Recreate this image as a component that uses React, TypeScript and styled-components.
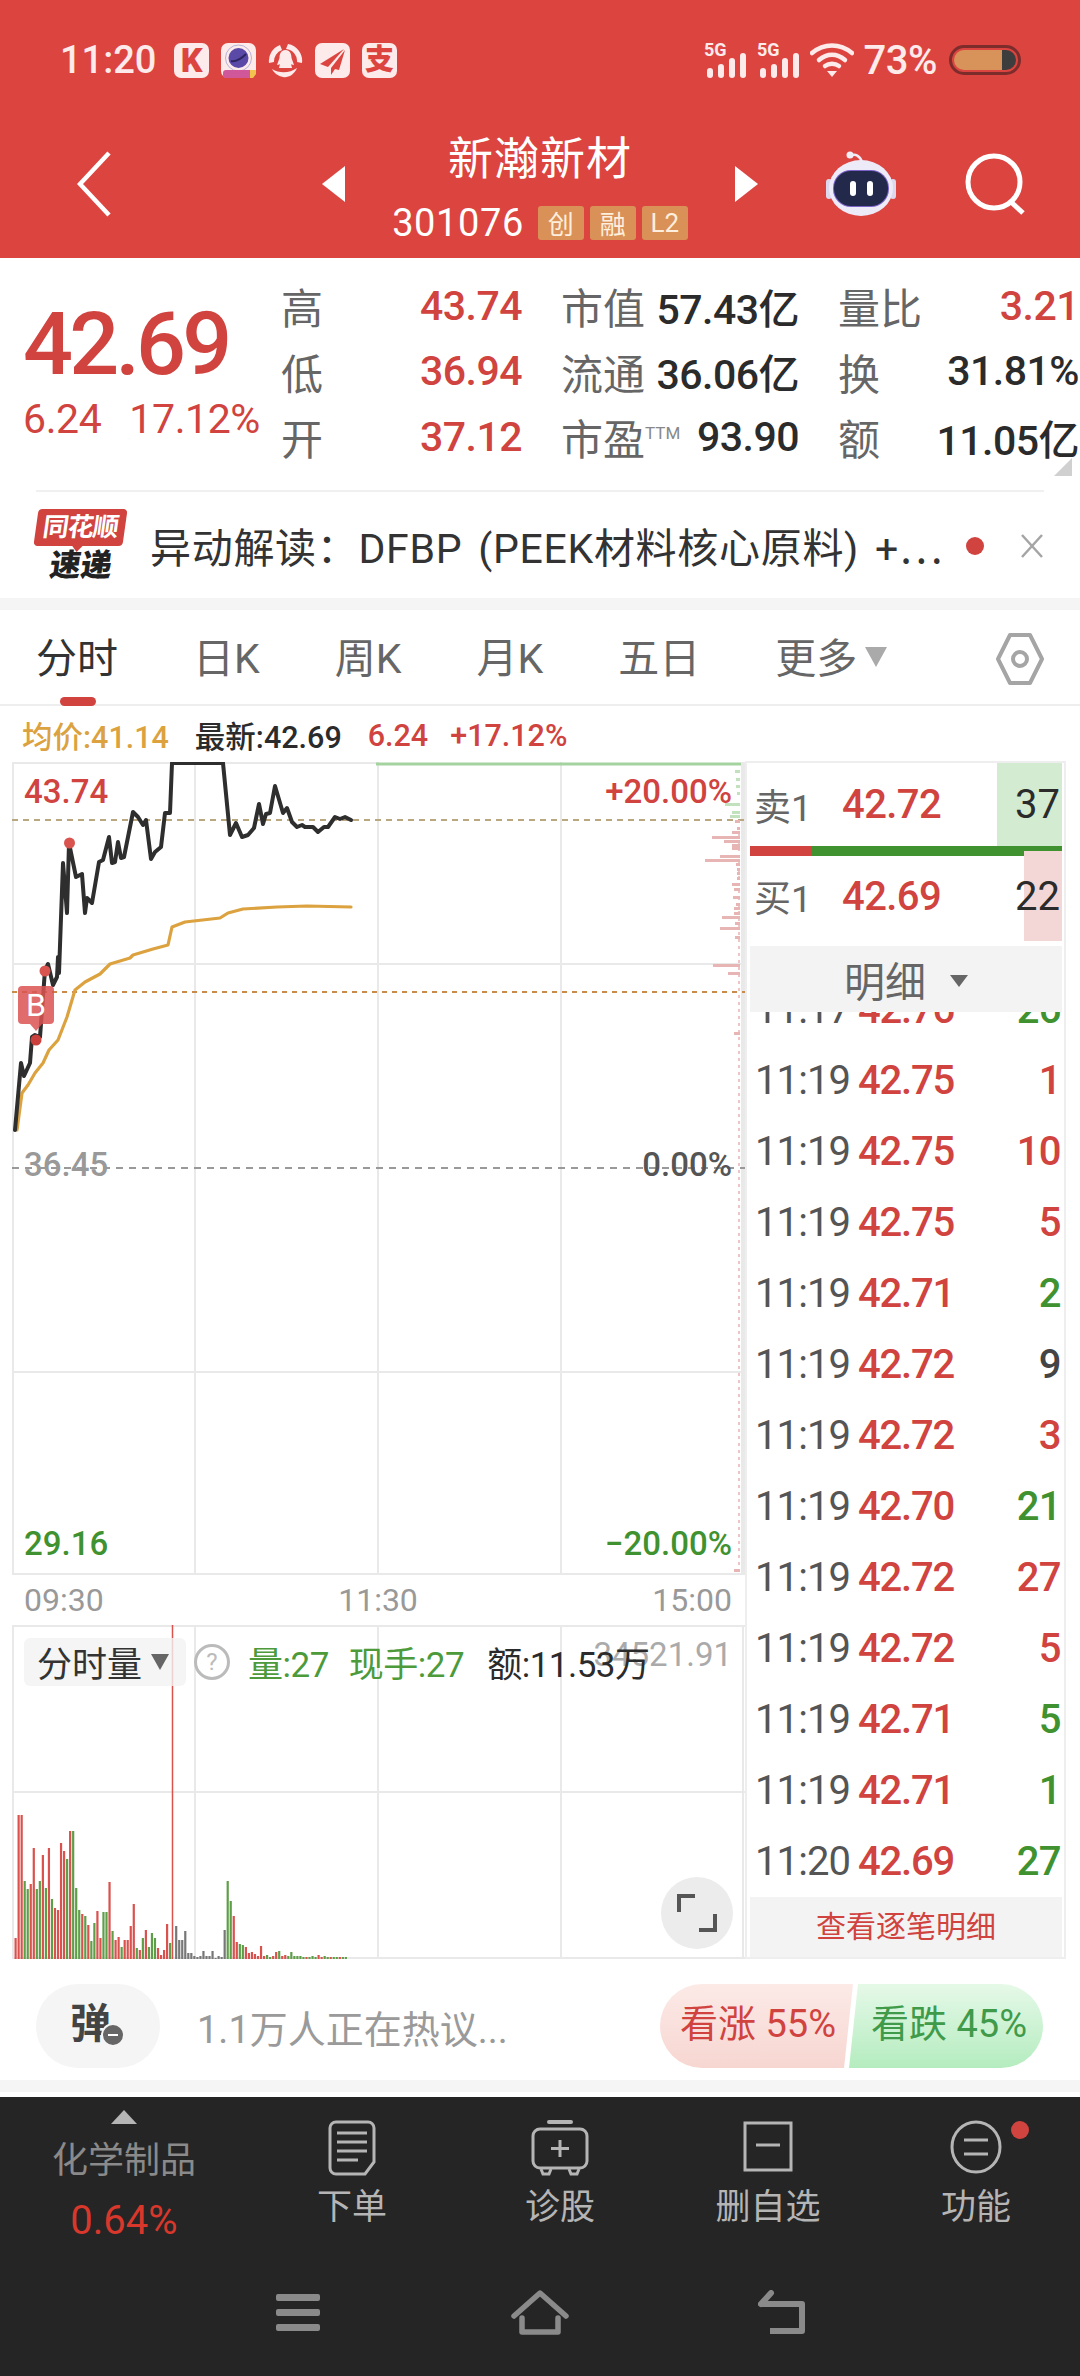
import React from "react";
import styled, { createGlobalStyle } from "styled-components";

const RED = "#d0433f";
const GREEN = "#3f922f";
const GRID = "#e9e9e9";

const GlobalStyle = createGlobalStyle`
  html, body {
    margin: 0;
    padding: 0;
    background: #fff;
  }
  * {
    box-sizing: border-box;
  }
  body {
    font-family: Roboto, "Noto Sans CJK SC", sans-serif;
  }
`;

const Page = styled.div`
  width: 1080px;
  height: 2376px;
  overflow: hidden;
  display: flex;
  flex-direction: column;
  background: #fff;
`;

/* header */
const Header = styled.header`
  height: 258px;
  background: #dc4440;
  color: #fff;
  flex-shrink: 0;
`;

const StatusBar = styled.div`
  height: 110px;
  display: flex;
  align-items: center;
  padding: 10px 60px 0;
  color: #fdeaea;
`;

const Clock = styled.span`
  font-size: 38px;
  font-weight: 500;
  width: 114px;
`;

const NoticeIcons = styled.div`
  display: flex;
  gap: 12px;
`;

const NoticeTile = styled.span`
  width: 35px;
  height: 35px;
  border-radius: 7px;
  background: #fdeaea;
  color: #dc4440;
  display: flex;
  align-items: center;
  justify-content: center;
  font-size: ${(p: { $size: number }) => p.$size}px;
  font-weight: 900;
  line-height: 1;
`;

const StatusRight = styled.div`
  margin-left: auto;
  margin-right: -1px;
  display: flex;
  align-items: center;
  gap: 10px;
`;

const BatteryText = styled.span`
  font-size: 40px;
  font-weight: 500;
  letter-spacing: -0.5px;
`;

const Battery = styled.div`
  width: 72px;
  height: 30px;
  border: 3px solid #7d2c2c;
  border-radius: 15px;
  padding: 2px;
  margin-left: 2px;
  display: flex;
  overflow: hidden;
`;

const BatteryFill = styled.div`
  width: 48px;
  background: #d8935a;
  border-radius: 10px 0 0 10px;
`;

const BatteryRest = styled.div`
  flex: 1;
  background: #3d3d3d;
  border-radius: 0 10px 10px 0;
`;

const NavRow = styled.div`
  height: 148px;
  display: grid;
  grid-template-columns: 322px 436px 322px;
  align-items: center;
`;

const BackSlot = styled.div`
  padding-left: 77px;
  display: flex;
  align-items: center;
`;

const TitleSlot = styled.div`
  display: flex;
  align-items: center;
  justify-content: space-between;
`;

const TitleStack = styled.div`
  display: flex;
  flex-direction: column;
  align-items: center;
  margin-top: 3px;
`;

const StockName = styled.div`
  font-size: 45px;
  line-height: 58px;
  letter-spacing: 1px;
`;

const CodeRow = styled.div`
  display: flex;
  align-items: center;
  gap: 6px;
  margin-top: 16px;
`;

const StockCode = styled.span`
  font-size: 38px;
  line-height: 36px;
  margin-right: 8px;
  letter-spacing: 0.6px;
`;

const TagBadge = styled.span`
  width: 46px;
  height: 34px;
  background: #d99158;
  border-radius: 3px;
  color: #fdeedd;
  font-size: 26px;
  display: flex;
  align-items: center;
  justify-content: center;
`;

const NavTools = styled.div`
  display: flex;
  align-items: center;
  padding-left: 67px;
  gap: 68px;
`;

const Caret = styled.span<{ $dir: "left" | "right" }>`
  width: 0;
  height: 0;
  border-top: 18px solid transparent;
  border-bottom: 18px solid transparent;
  ${(p) => (p.$dir === "left" ? "border-right: 23px solid #fff;" : "border-left: 23px solid #fff;")}
`;

/* quote */
const Quote = styled.section`
  height: 232px;
  display: flex;
  position: relative;
  flex-shrink: 0;
`;

const PriceBlock = styled.div`
  width: 281px;
  padding: 38px 0 0 23px;
  color: ${RED};
`;

const BigPrice = styled.div`
  font-size: 88px;
  line-height: 96px;
  font-weight: 500;
  letter-spacing: -3.8px;
`;

const ChangeRow = styled.div`
  display: flex;
  gap: 28px;
  font-size: 41px;
  line-height: 48px;
  margin-top: 3px;
  letter-spacing: -0.4px;
`;

const StatGrid = styled.div`
  display: grid;
  grid-template-columns: 241px 238px 241px;
  column-gap: 39px;
  grid-auto-rows: 65.5px;
  padding-top: 15px;
`;

const StatCell = styled.div`
  display: flex;
  justify-content: space-between;
  align-items: center;
  white-space: nowrap;
`;

const StatLabel = styled.span`
  font-size: 42px;
  color: #666;
  position: relative;
`;

const StatSup = styled.sup`
  font-size: 17px;
  color: #888;
  vertical-align: 16px;
  line-height: 0;
`;

const StatValue = styled.span<{ $red?: boolean }>`
  font-size: 41px;
  font-weight: 500;
  letter-spacing: -0.5px;
  color: ${(p) => (p.$red ? RED : "#2b2b2b")};
`;

const CornerMark = styled.span`
  position: absolute;
  right: 8px;
  bottom: 14px;
  width: 0;
  height: 0;
  border-left: 18px solid transparent;
  border-bottom: 18px solid #d0d0d0;
`;

/* news */
const NewsRow = styled.div`
  height: 108px;
  margin: 0 36px;
  border-top: 2px solid #f0f0f0;
  display: flex;
  align-items: center;
  flex-shrink: 0;
  position: relative;
`;

const Logo = styled.div`
  width: 89px;
  display: flex;
  flex-direction: column;
  align-items: center;
  margin-top: 2px;
`;

const LogoBubble = styled.div`
  width: 89px;
  height: 37px;
  background: ${RED};
  border-radius: 4px;
  color: #fff;
  font-size: 26px;
  font-weight: 700;
  line-height: 37px;
  text-align: center;
  white-space: nowrap;
  letter-spacing: -1px;
  transform: skewX(-8deg);
  position: relative;
  &::after {
    content: "";
    position: absolute;
    left: 38px;
    bottom: -6px;
    border-left: 6px solid transparent;
    border-right: 6px solid transparent;
    border-top: 7px solid ${RED};
  }
`;

const LogoWord = styled.div`
  font-size: 31px;
  font-weight: 900;
  line-height: 34px;
  color: #222;
  margin-top: 3px;
  transform: skewX(-8deg);
`;

const NewsText = styled.div`
  font-size: 41px;
  color: #333;
  margin-left: 25px;
  white-space: nowrap;
  letter-spacing: 0.7px;
  word-spacing: 5px;
`;

const NewsEllipsis = styled.span`
  font-family: "Noto Sans CJK SC", sans-serif;
`;

const NewsDot = styled.span`
  position: absolute;
  left: 930px;
  top: 45px;
  width: 18px;
  height: 18px;
  border-radius: 50%;
  background: ${RED};
`;

const NewsClose = styled.svg`
  position: absolute;
  right: 0;
  top: 42px;
`;

const Band = styled.div<{ $h: number }>`
  height: ${(p) => p.$h}px;
  background: #f5f5f5;
  flex-shrink: 0;
`;

/* period tabs */
const Tabs = styled.nav`
  height: 96px;
  display: flex;
  gap: 75px;
  padding: 0 36px 0 36px;
  align-items: flex-start;
  border-bottom: 2px solid #eee;
  flex-shrink: 0;
`;

const Tab = styled.div<{ $active?: boolean }>`
  font-size: 41px;
  line-height: 98px;
  height: 94px;
  white-space: nowrap;
  color: ${(p) => (p.$active ? "#333" : "#666")};
  position: relative;
  ${(p) =>
    p.$active &&
    `
    &::after {
      content: "";
      position: absolute;
      left: 24px;
      bottom: -2px;
      width: 36px;
      height: 9px;
      border-radius: 5px;
      background: ${RED};
    }
  `}
`;

const MoreTriangle = styled.span`
  display: inline-block;
  margin-left: 8px;
  vertical-align: 6px;
  border-left: 11px solid transparent;
  border-right: 11px solid transparent;
  border-top: 20px solid #aaa;
`;

const HexIcon = styled.svg`
  margin-left: auto;
  margin-top: 22px;
`;

/* price readout */
const Readout = styled.div`
  height: 56px;
  display: flex;
  align-items: center;
  padding: 2px 0 0 22px;
  font-size: 30.5px;
  font-weight: 500;
  flex-shrink: 0;
`;

const ReadoutItem = styled.span<{ $color: string; $gap: number }>`
  color: ${(p) => p.$color};
  margin-right: ${(p) => p.$gap}px;
  white-space: nowrap;
`;

/* chart + trade list */
const Market = styled.div`
  height: 1198px;
  display: flex;
  padding-left: 12px;
  flex-shrink: 0;
`;

const ChartColumn = styled.div`
  width: 733px;
  display: flex;
  flex-direction: column;
`;

const PricePane = styled.div`
  height: 813px;
  position: relative;
`;

const Plot = styled.svg`
  display: block;
`;

const PaneLabel = styled.span<{ $top: number; $color: string; $right?: boolean }>`
  position: absolute;
  top: ${(p) => p.$top}px;
  ${(p) => (p.$right ? "right: 13px;" : "left: 12px;")}
  color: ${(p) => p.$color};
  font-size: 33px;
  line-height: 40px;
  font-weight: 500;
`;

const BuyBadge = styled.span`
  position: absolute;
  left: 6px;
  top: 224px;
  width: 36px;
  height: 38px;
  border-radius: 4px;
  background: rgba(218, 82, 82, 0.85);
  color: #fff;
  font-size: 32px;
  line-height: 38px;
  text-align: center;
  &::after {
    content: "";
    position: absolute;
    left: 12px;
    bottom: -7px;
    border-left: 6px solid transparent;
    border-right: 6px solid transparent;
    border-top: 7px solid rgba(218, 82, 82, 0.85);
  }
`;

const TimeAxis = styled.div`
  height: 50px;
  display: flex;
  justify-content: space-between;
  align-items: center;
  padding: 0 13px 0 12px;
  font-size: 32px;
  color: #999;
`;

const VolumePane = styled.div`
  height: 334px;
  position: relative;
`;

const VolumeLegend = styled.div`
  position: absolute;
  left: 12px;
  top: 11px;
  display: flex;
  align-items: center;
  font-size: 35px;
  white-space: nowrap;
`;

const VolumeSelect = styled.div`
  width: 162px;
  height: 48px;
  background: #f3f3f3cc;
  border-radius: 6px;
  display: flex;
  align-items: center;
  padding-left: 13px;
  gap: 9px;
  color: #333;
  font-size: 35px;
`;

const SelectTriangle = styled.span`
  border-left: 9px solid transparent;
  border-right: 9px solid transparent;
  border-top: 16px solid #666;
`;

const HelpIcon = styled.span`
  width: 36px;
  height: 36px;
  border-radius: 50%;
  border: 3px solid #bbb;
  margin: 0 18px 0 8px;
  color: #bbb;
  font-size: 24px;
  line-height: 30px;
  text-align: center;
`;

const LegendValue = styled.span<{ $color: string; $gap: number }>`
  color: ${(p) => p.$color};
  margin-right: ${(p) => p.$gap}px;
  letter-spacing: -0.5px;
`;

const VolumeMax = styled.span`
  position: absolute;
  right: 13px;
  top: 10px;
  font-size: 33px;
  color: #aaa;
`;

const ExpandButton = styled.button`
  position: absolute;
  left: 649px;
  top: 252px;
  width: 72px;
  height: 72px;
  border: 0;
  padding: 0;
  border-radius: 50%;
  background: #ececec;
  display: flex;
  align-items: center;
  justify-content: center;
`;

const TradePanel = styled.aside`
  width: 321px;
  height: 1198px;
  margin-top: -1px;
  border: 2px solid #eee;
  padding: 0 2px 0 3px;
  display: flex;
  flex-direction: column;
`;

const DepthRow = styled.div<{ $h: number }>`
  height: ${(p) => p.$h}px;
  display: flex;
  align-items: center;
  position: relative;
  padding: 0 2px 0 4px;
  font-size: 40px;
  flex-shrink: 0;
`;

const DepthShade = styled.span<{ $color: string; $top: number; $width: number; $h: number }>`
  position: absolute;
  right: 0;
  top: ${(p) => p.$top}px;
  width: ${(p) => p.$width}px;
  height: ${(p) => p.$h}px;
  background: ${(p) => p.$color};
`;

const DepthLabel = styled.span`
  width: 88px;
  color: #666;
  position: relative;
  font-size: 37px;
`;

const DepthPrice = styled.span`
  color: ${RED};
  position: relative;
  font-weight: 500;
  letter-spacing: -0.6px;
`;

const DepthQty = styled.span`
  margin-left: auto;
  color: #2b2b2b;
  position: relative;
`;

const DepthBar = styled.div`
  height: 10px;
  background: ${GREEN};
  position: relative;
  flex-shrink: 0;
`;

const DepthBarRed = styled.div`
  width: 62px;
  height: 100%;
  background: ${RED};
`;

const DetailToggle = styled.div`
  height: 66px;
  margin-top: 10px;
  background: #f3f3f3;
  display: flex;
  align-items: center;
  justify-content: center;
  gap: 24px;
  color: #666;
  font-size: 41px;
  flex-shrink: 0;
  position: relative;
`;

const ToggleTriangle = styled.span`
  border-left: 9px solid transparent;
  border-right: 9px solid transparent;
  border-top: 12px solid #666;
  margin-top: 4px;
`;

const TradeList = styled.div`
  flex: 1;
  min-height: 0;
  overflow: hidden;
  display: flex;
  flex-direction: column;
  justify-content: flex-end;
`;

const TradeRow = styled.div`
  height: 71px;
  flex-shrink: 0;
  display: flex;
  align-items: center;
  padding: 0 1px 0 5px;
  font-size: 40px;
`;

const TradeTime = styled.span`
  width: 103px;
  color: #555;
  letter-spacing: -0.9px;
`;

const TradePrice = styled.span`
  color: ${RED};
  font-weight: 500;
  letter-spacing: -1.2px;
`;

const TradeQty = styled.span<{ $tone: "up" | "down" | "flat" }>`
  margin-left: auto;
  font-weight: 500;
  letter-spacing: -0.6px;
  color: ${(p) => (p.$tone === "up" ? RED : p.$tone === "down" ? GREEN : "#444")};
`;

const ViewAll = styled.div`
  height: 60px;
  background: #f3f3f3;
  color: ${RED};
  font-size: 30px;
  line-height: 60px;
  text-align: center;
  flex-shrink: 0;
`;

/* comment bar */
const CommentBar = styled.div`
  flex: 1;
  display: flex;
  align-items: center;
  padding: 12px 37px 0 36px;
`;

const DanmuButton = styled.div`
  width: 124px;
  height: 84px;
  border-radius: 42px;
  background: #f5f5f5;
  color: #444;
  font-size: 41px;
  font-weight: 700;
  line-height: 80px;
  padding-left: 34px;
  position: relative;
`;

const DanmuMinus = styled.span`
  position: absolute;
  left: 65px;
  top: 39px;
  width: 24px;
  height: 24px;
  border-radius: 50%;
  border: 2px solid #f5f5f5;
  background: #666;
  &::after {
    content: "";
    position: absolute;
    left: 5px;
    top: 9px;
    width: 10px;
    height: 2px;
    background: #fff;
  }
`;

const CommentHint = styled.span`
  margin-left: 37px;
  font-size: 38px;
  color: #9a9a9a;
  letter-spacing: 0;
`;

const VotePill = styled.div`
  margin-left: auto;
  width: 383px;
  height: 84px;
  display: flex;
  border-radius: 42px;
  overflow: hidden;
`;

const VoteSide = styled.div<{ $up?: boolean }>`
  height: 100%;
  font-size: 38px;
  line-height: 80px;
  white-space: nowrap;
  ${(p) =>
    p.$up
      ? `
    width: 193px;
    padding-left: 20px;
    color: ${RED};
    background: linear-gradient(#fceae7, #f7d6d1);
    clip-path: polygon(0 0, 100% 0, calc(100% - 9px) 100%, 0 100%);
  `
      : `
    width: 194px;
    margin-left: -4px;
    padding-left: 22px;
    color: #3f9a4a;
    background: linear-gradient(#e6f9e8, #b4ecbf);
    clip-path: polygon(9px 0, 100% 0, 100% 100%, 0 100%);
  `}
`;

/* dark function bar */
const DarkBar = styled.footer`
  margin-top: 5px;
  height: 279px;
  background: #252525;
  flex-shrink: 0;
`;

const FuncRow = styled.div`
  display: flex;
  height: 170px;
`;

const SectorItem = styled.div`
  width: 248px;
  display: flex;
  flex-direction: column;
  align-items: center;
  padding-top: 13px;
`;

const SectorArrow = styled.span`
  border-left: 13px solid transparent;
  border-right: 13px solid transparent;
  border-bottom: 14px solid #b5b5b5;
`;

const SectorName = styled.span`
  font-size: 36px;
  line-height: 50px;
  margin-top: 12px;
  color: #8a8a8a;
`;

const SectorChange = styled.span`
  font-size: 40px;
  line-height: 48px;
  margin-top: 11px;
  color: #d8372c;
`;

const FuncItem = styled.div`
  width: 208px;
  display: flex;
  flex-direction: column;
  align-items: center;
  padding-top: 23px;
  position: relative;
`;

const FuncLabel = styled.span`
  font-size: 35px;
  line-height: 48px;
  margin-top: 8px;
  color: #b5b5b5;
`;

const FuncDot = styled.span`
  position: absolute;
  left: 139px;
  top: 24px;
  width: 18px;
  height: 18px;
  border-radius: 50%;
  background: ${RED};
`;

const SystemNav = styled.div`
  display: grid;
  grid-template-columns: repeat(3, 242px);
  justify-content: center;
  justify-items: center;
  padding-top: 23px;
`;

const Wave = ({ d, stroke, w }: { d: string; stroke: string; w: number }) => (
  <path d={d} fill="none" stroke={stroke} strokeWidth={w} strokeLinejoin="round" strokeLinecap="round" />
);

const PRICE_LINE =
  "15,1130 21,1063 24,1076 30,1063 32,1037 35,1035 40,1037 45,970 48,964 53,985 57,977 58,957 59,973 63,863 67,913 69,843 76,877 82,874 85,913 87,898 92,903 99,862 103,860 109,837 112,863 115,862 118,842 121,858 124,857 133,812 138,817 143,825 146,820 151,859 155,852 161,847 165,813 170,813 172,763 223,763 230,835 236,823 242,837 248,835 254,828 259,804 263,824 266,814 270,813 275,786 283,813 287,808 292,822 297,827 302,825 305,827 313,827 318,832 324,827 328,827 335,817 340,819 345,817 351,820";

const AVG_LINE =
  "17,1130 22,1093 28,1085 35,1073 43,1063 49,1050 58,1040 67,1017 75,990 85,982 100,974 110,964 130,958 133,955 153,949 168,945 172,927 185,922 220,918 228,913 243,909 277,907 307,906 351,907";

const ASK_BARS: [number, number][] = [[770, 5], [778, 4], [785, 4], [792, 3], [803, 15], [811, 8], [815, 10]];
const BID_BARS: [number, number][] = [
  [820, 5], [827, 3], [831, 8], [836, 28], [840, 16], [844, 8], [847, 8], [855, 20], [859, 35], [863, 4],
  [868, 3], [872, 3], [877, 3], [883, 8], [888, 6], [896, 7], [903, 4], [907, 6], [912, 6], [916, 18],
  [922, 5], [927, 20], [936, 5], [964, 27], [972, 12], [1032, 6], [1569, 6],
];

// height + colour per minute, read off the volume pane
const VOLUME =
  "21r 144r 144r 78g 70g 75r 111r 70g 78g 104r 71g 111r 60g 51r 49r 116r 108r 100g 128r 128g 71g 49g 45r 43g 34r 18g 36g 48r 21r 47g 47g 77r 28g 19r 22r 12g 19r 19r 33r 55r 11g 9r 21g 29r 12g 26g 21g 11r 4r 9r 35r 16g 0r 33k 19k 19k 28k 6k 6k 3k 2k 3k 8k 3k 3k 8k 1k 3k 2k 29k 78g 58g 43r 17r 15g 14g 12r 6r 7r 5r 3r 13r 3r 4g 2g 3r 7r 8g 3r 4r 3g 7g 3g 3g 3g 2g 2r 2g 3g 2g 4r 2r 3g 2g 2r 2g 2g 2r 2g 2g";

const VOL_COLOR: Record<string, string> = { r: "#d9524e", g: "#5f9e48", k: "#777" };

const TRADES: [string, string, string, "up" | "down" | "flat"][] = [
  ["11:17", "42.76", "26", "down"],
  ["11:19", "42.75", "1", "up"],
  ["11:19", "42.75", "10", "up"],
  ["11:19", "42.75", "5", "up"],
  ["11:19", "42.71", "2", "down"],
  ["11:19", "42.72", "9", "flat"],
  ["11:19", "42.72", "3", "up"],
  ["11:19", "42.70", "21", "down"],
  ["11:19", "42.72", "27", "up"],
  ["11:19", "42.72", "5", "up"],
  ["11:19", "42.71", "5", "down"],
  ["11:19", "42.71", "1", "down"],
  ["11:20", "42.69", "27", "down"],
];

const STATS: { label: React.ReactNode; value: string; red?: boolean }[] = [
  { label: "高", value: "43.74", red: true },
  { label: "市值", value: "57.43亿" },
  { label: "量比", value: "3.21", red: true },
  { label: "低", value: "36.94", red: true },
  { label: "流通", value: "36.06亿" },
  { label: "换", value: "31.81%" },
  { label: "开", value: "37.12", red: true },
  { label: <>市盈<StatSup>TTM</StatSup></>, value: "93.90" },
  { label: "额", value: "11.05亿" },
];

const SignalIcon = () => (
  <svg width="43" height="44" viewBox="0 -4 43 44">
    <text x="0" y="14" fontSize="18" fontWeight="700" fill="#fdeaea" fontFamily="Roboto, sans-serif">5G</text>
    <rect x="3" y="26" width="6" height="10" rx="3" fill="#fdeaea" />
    <rect x="14" y="22" width="6" height="14" rx="3" fill="#fdeaea" />
    <rect x="25" y="16" width="6" height="20" rx="3" fill="#fdeaea" />
    <rect x="36" y="11" width="6" height="25" rx="3" fill="#fdeaea" />
  </svg>
);

const WifiIcon = () => (
  <svg width="44" height="36" viewBox="0 0 44 36" fill="none" stroke="#fdeaea" strokeWidth="4.5" strokeLinecap="round">
    <path d="M2 11C14 1 30 1 42 11" />
    <path d="M9 18C17 11 27 11 35 18" />
    <path d="M15 24C19 21 25 21 29 24" />
    <path d="M17 29H27L22 35Z" fill="#fdeaea" stroke="none" />
  </svg>
);

const CameraApp = () => (
  <svg width="35" height="35" viewBox="0 0 35 35">
    <rect width="35" height="35" rx="7" fill="#fdeaea" />
    <circle cx="17.5" cy="15" r="13" fill="none" stroke="#b6b3d8" strokeWidth="1" />
    <circle cx="17.5" cy="15" r="10" fill="#5b49a8" />
    <path d="M10 18C15 19 20 16 25 11" stroke="#2d2560" strokeWidth="2" fill="none" />
    <rect x="2" y="27" width="31" height="8" rx="3" fill="#d0579a" />
    <path d="M29 27H35V31L32 35H29Z" fill="#f2c14e" />
  </svg>
);

const QqApp = () => (
  <svg width="35" height="35" viewBox="0 0 35 35">
    <path d="M20 1A17 17 0 0 1 34 20L29 19A12 12 0 0 0 18 6Z" fill="#fdeaea" />
    <path d="M12 2L14 7A12 12 0 0 0 6 19L1 20A17 17 0 0 1 12 2Z" fill="#fdeaea" />
    <path d="M4 26C12 31 22 30 29 25C26 32 20 35 15 34C10 33 6 30 4 26Z" fill="#fdeaea" />
    <path d="M17.5 7C13 7 11.5 11 11.5 15L9 22C11 22 12 21 12 21L11 25H24L23 21C23 21 24 22 26 22L23.5 15C23.5 11 22 7 17.5 7Z" fill="#fdeaea" />
  </svg>
);

const PlaneApp = () => (
  <svg width="35" height="35" viewBox="0 0 35 35">
    <rect width="35" height="35" rx="7" fill="#fdeaea" />
    <path d="M29 6L5 21L13 24Z" fill="#dc4440" />
    <path d="M30 7L16 25L16 32L20 26L24 27Z" fill="#dc4440" />
  </svg>
);

const RobotIcon = () => (
  <svg width="72" height="66" viewBox="0 0 72 66">
    <path d="M26 5C30 2 35 5 37 11" fill="none" stroke="#efeaf6" strokeWidth="2.5" />
    <circle cx="25" cy="4" r="3.5" fill="#f2eef8" />
    <rect x="1" y="28" width="6" height="20" rx="3" fill="#dcd8ee" />
    <rect x="65" y="28" width="6" height="20" rx="3" fill="#dcd8ee" />
    <ellipse cx="36" cy="37" rx="32" ry="28" fill="#eeebf8" />
    <rect x="8" y="19" width="56" height="37" rx="18" fill="#7a62c8" />
    <rect x="9" y="20" width="54" height="35" rx="17" fill="#22294a" />
    <rect x="25" y="30" width="6" height="15" rx="3" fill="#fff" />
    <rect x="42" y="30" width="6" height="15" rx="3" fill="#fff" />
  </svg>
);

const App = () => {
  const gridColor = GRID;
  return (
    <Page>
      <GlobalStyle />
      <Header>
        <StatusBar>
          <Clock>11:20</Clock>
          <NoticeIcons>
            <NoticeTile $size={34}>K</NoticeTile>
            <CameraApp />
            <QqApp />
            <PlaneApp />
            <NoticeTile $size={29}>支</NoticeTile>
          </NoticeIcons>
          <StatusRight>
            <SignalIcon />
            <SignalIcon />
            <WifiIcon />
            <BatteryText>73%</BatteryText>
            <Battery>
              <BatteryFill />
              <BatteryRest />
            </Battery>
          </StatusRight>
        </StatusBar>
        <NavRow>
          <BackSlot>
            <svg width="34" height="66" viewBox="0 0 34 66" fill="none" stroke="#fff" strokeWidth="4.5">
              <path d="M32 2L3 33L32 64" />
            </svg>
          </BackSlot>
          <TitleSlot>
            <Caret $dir="left" />
            <TitleStack>
              <StockName>新瀚新材</StockName>
              <CodeRow>
                <StockCode>301076</StockCode>
                <TagBadge>创</TagBadge>
                <TagBadge>融</TagBadge>
                <TagBadge>L2</TagBadge>
              </CodeRow>
            </TitleStack>
            <Caret $dir="right" />
          </TitleSlot>
          <NavTools>
            <RobotIcon />
            <svg width="62" height="62" viewBox="0 0 62 62" fill="none" stroke="#fff" strokeWidth="5">
              <circle cx="29" cy="29" r="26" />
              <path d="M46 49L58 60" />
            </svg>
          </NavTools>
        </NavRow>
      </Header>

      <Quote>
        <PriceBlock>
          <BigPrice>42.69</BigPrice>
          <ChangeRow>
            <span>6.24</span>
            <span>17.12%</span>
          </ChangeRow>
        </PriceBlock>
        <StatGrid>
          {STATS.map((s, i) => (
            <StatCell key={i}>
              <StatLabel>{s.label}</StatLabel>
              <StatValue $red={s.red}>{s.value}</StatValue>
            </StatCell>
          ))}
        </StatGrid>
        <CornerMark />
      </Quote>

      <NewsRow>
        <Logo>
          <LogoBubble>同花顺</LogoBubble>
          <LogoWord>速递</LogoWord>
        </Logo>
        <NewsText>
          异动解读：DFBP (PEEK材料核心原料) +<NewsEllipsis>…</NewsEllipsis>
        </NewsText>
        <NewsDot />
        <NewsClose width="24" height="24" viewBox="0 0 24 24" fill="none" stroke="#a5a5a5" strokeWidth="2.5">
          <path d="M2 1L22 23M22 1L2 23" />
        </NewsClose>
      </NewsRow>
      <Band $h={12} />

      <Tabs>
        <Tab $active>分时</Tab>
        <Tab>日K</Tab>
        <Tab>周K</Tab>
        <Tab>月K</Tab>
        <Tab>五日</Tab>
        <Tab>
          更多
          <MoreTriangle />
        </Tab>
        <HexIcon width="48" height="54" viewBox="0 0 48 54" fill="none" stroke="#a5a5a5" strokeWidth="4">
          <path d="M14 3H34L46 27L34 51H14L2 27Z" strokeLinejoin="round" />
          <circle cx="24" cy="27" r="7" />
        </HexIcon>
      </Tabs>

      <Readout>
        <ReadoutItem $color="#dba23f" $gap={26}>均价:41.14</ReadoutItem>
        <ReadoutItem $color="#2b2b2b" $gap={26}>最新:42.69</ReadoutItem>
        <ReadoutItem $color={RED} $gap={22}>6.24</ReadoutItem>
        <ReadoutItem $color={RED} $gap={0}>+17.12%</ReadoutItem>
      </Readout>

      <Market>
        <ChartColumn>
          <PricePane>
            <Plot width="733" height="813" viewBox="12 762 733 813">
              {[964, 1372, 1574].map((y) => (
                <line key={y} x1="12" x2="745" y1={y} y2={y} stroke={gridColor} strokeWidth="2" />
              ))}
              <line x1="12" x2="378" y1="763" y2="763" stroke={gridColor} strokeWidth="2" />
              {[13, 195, 378, 561, 743].map((x) => (
                <line key={x} x1={x} x2={x} y1="762" y2="1575" stroke={gridColor} strokeWidth={x === 743 ? 4 : 2} />
              ))}
              <line x1="376" x2="741" y1="764" y2="764" stroke="#a5d3a0" strokeWidth="3" />
              <line x1="12" x2="745" y1="820" y2="820" stroke="#b9a77f" strokeWidth="2" strokeDasharray="6 5" />
              <line x1="12" x2="745" y1="992" y2="992" stroke="#c98a4a" strokeWidth="2" strokeDasharray="5 5" />
              <line x1="12" x2="745" y1="1168" y2="1168" stroke="#999" strokeWidth="2" strokeDasharray="7 6" />
              <line x1="739" x2="739" y1="820" y2="1574" stroke="#eec4c4" strokeWidth="2" strokeDasharray="3 4" />
              {ASK_BARS.map(([y, len]) => (
                <rect key={y} x={740 - len} y={y} width={len} height="3" fill="#c2e2bd" />
              ))}
              {BID_BARS.map(([y, len]) => (
                <rect key={y} x={740 - len} y={y} width={len} height="3" fill="#e8b5b5" />
              ))}
              <Wave d={`M${AVG_LINE}`} stroke="#dba23f" w={3.2} />
              <Wave d={`M${PRICE_LINE}`} stroke="#2e2e2e" w={4} />
              <circle cx="69.5" cy="843" r="5.5" fill="#d9534f" />
              <circle cx="45" cy="971" r="5.5" fill="#d9534f" />
              <circle cx="36" cy="1040" r="5.5" fill="#c9403c" />
            </Plot>
            <BuyBadge>B</BuyBadge>
            <PaneLabel $top={10} $color={RED}>43.74</PaneLabel>
            <PaneLabel $top={10} $color={RED} $right>+20.00%</PaneLabel>
            <PaneLabel $top={383} $color="#999">36.45</PaneLabel>
            <PaneLabel $top={383} $color="#555" $right>0.00%</PaneLabel>
            <PaneLabel $top={762} $color={GREEN}>29.16</PaneLabel>
            <PaneLabel $top={762} $color={GREEN} $right>−20.00%</PaneLabel>
          </PricePane>

          <TimeAxis>
            <span>09:30</span>
            <span>11:30</span>
            <span>15:00</span>
          </TimeAxis>

          <VolumePane>
            <Plot width="733" height="334" viewBox="12 1625 733 334">
              {[1626, 1792, 1958].map((y) => (
                <line key={y} x1="12" x2="745" y1={y} y2={y} stroke={gridColor} strokeWidth="2" />
              ))}
              {[13, 195, 378, 561, 743].map((x) => (
                <line key={x} x1={x} x2={x} y1="1625" y2="1959" stroke={gridColor} strokeWidth="2" />
              ))}
              {VOLUME.split(" ").map((bar, i) => {
                const h = parseInt(bar, 10);
                return (
                  <rect
                    key={i}
                    x={14.5 + i * 3.03}
                    y={1959 - h}
                    width="2.2"
                    height={h}
                    fill={VOL_COLOR[bar[bar.length - 1]]}
                  />
                );
              })}
              <line x1="172.5" x2="172.5" y1="1625" y2="1959" stroke="#d9524e" strokeWidth="1.5" />
            </Plot>
            <VolumeMax>34521.91</VolumeMax>
            <VolumeLegend>
              <VolumeSelect>
                分时量
                <SelectTriangle />
              </VolumeSelect>
              <HelpIcon>?</HelpIcon>
              <LegendValue $color="#4c9a3a" $gap={20}>量:27</LegendValue>
              <LegendValue $color="#4c9a3a" $gap={23}>现手:27</LegendValue>
              <LegendValue $color="#2b2b2b" $gap={0}>额:11.53万</LegendValue>
            </VolumeLegend>
            <ExpandButton aria-label="expand">
              <svg width="40" height="40" viewBox="0 0 40 40" fill="none" stroke="#555" strokeWidth="4">
                <path d="M2 19V3H18" />
                <path d="M38 21V37H22" />
              </svg>
            </ExpandButton>
          </VolumePane>
        </ChartColumn>

        <TradePanel>
          <DepthRow $h={83}>
            <DepthShade $color="#d3ebd1" $top={0} $width={65} $h={83} />
            <DepthLabel>卖1</DepthLabel>
            <DepthPrice>42.72</DepthPrice>
            <DepthQty>37</DepthQty>
          </DepthRow>
          <DepthBar>
            <DepthBarRed />
          </DepthBar>
          <DepthRow $h={80}>
            <DepthShade $color="#f3d7d7" $top={-5} $width={38} $h={90} />
            <DepthLabel>买1</DepthLabel>
            <DepthPrice>42.69</DepthPrice>
            <DepthQty>22</DepthQty>
          </DepthRow>
          <DetailToggle>
            明细
            <ToggleTriangle />
          </DetailToggle>
          <TradeList>
            {TRADES.map(([time, price, qty, tone], i) => (
              <TradeRow key={i}>
                <TradeTime>{time}</TradeTime>
                <TradePrice>{price}</TradePrice>
                <TradeQty $tone={tone}>{qty}</TradeQty>
              </TradeRow>
            ))}
          </TradeList>
          <ViewAll>查看逐笔明细</ViewAll>
        </TradePanel>
      </Market>

      <CommentBar>
        <DanmuButton>
          弹
          <DanmuMinus />
        </DanmuButton>
        <CommentHint>1.1万人正在热议...</CommentHint>
        <VotePill>
          <VoteSide $up>看涨 55%</VoteSide>
          <VoteSide>看跌 45%</VoteSide>
        </VotePill>
      </CommentBar>
      <Band $h={12} />

      <DarkBar>
        <FuncRow>
          <SectorItem>
            <SectorArrow />
            <SectorName>化学制品</SectorName>
            <SectorChange>0.64%</SectorChange>
          </SectorItem>
          <FuncItem>
            <svg width="48" height="56" viewBox="0 0 48 56" fill="none" stroke="#b5b5b5" strokeWidth="3">
              <path d="M8 2H40A6 6 0 0 1 46 8V42L37 54H8A6 6 0 0 1 2 48V8A6 6 0 0 1 8 2Z" />
              <path d="M9 13H39M9 22H39M9 31H39M9 40H30" />
            </svg>
            <FuncLabel>下单</FuncLabel>
          </FuncItem>
          <FuncItem>
            <svg width="58" height="56" viewBox="0 0 58 56" fill="none" stroke="#b5b5b5" strokeWidth="3">
              <path d="M18 2H40" strokeWidth="4" strokeLinecap="round" />
              <rect x="2" y="9" width="54" height="39" rx="7" />
              <path d="M29 20V37M20 28.5H38M10 49L12 54H18L20 49M38 49L40 54H46L48 49" />
            </svg>
            <FuncLabel>诊股</FuncLabel>
          </FuncItem>
          <FuncItem>
            <svg width="50" height="56" viewBox="0 0 50 56" fill="none" stroke="#b5b5b5" strokeWidth="3">
              <rect x="2" y="3" width="46" height="47" />
              <path d="M13 25H37" />
            </svg>
            <FuncLabel>删自选</FuncLabel>
          </FuncItem>
          <FuncItem>
            <svg width="52" height="56" viewBox="0 0 52 56" fill="none" stroke="#b5b5b5" strokeWidth="3">
              <ellipse cx="26" cy="27" rx="24" ry="25" />
              <path d="M14 20H38M14 34H38" />
            </svg>
            <FuncLabel>功能</FuncLabel>
            <FuncDot />
          </FuncItem>
        </FuncRow>
        <SystemNav>
          <svg width="46" height="44" viewBox="0 0 46 44" fill="#8a8a8a">
            <rect x="1" y="4" width="44" height="7" rx="2" />
            <rect x="1" y="19" width="44" height="7" rx="2" />
            <rect x="1" y="34" width="44" height="7" rx="2" />
          </svg>
          <svg width="60" height="46" viewBox="0 0 60 46" fill="none" stroke="#8a8a8a" strokeWidth="5.5" strokeLinejoin="round" strokeLinecap="round">
            <path d="M4 26L30 3L56 26" />
            <path d="M12 28V42H48V28" />
          </svg>
          <svg width="48" height="46" viewBox="0 0 48 46" fill="none" stroke="#8a8a8a" strokeWidth="6" strokeLinejoin="round">
            <path d="M4 14H44V41H12" />
            <path d="M13 3L3 14" strokeLinecap="round" />
          </svg>
        </SystemNav>
      </DarkBar>
    </Page>
  );
};

export default App;
